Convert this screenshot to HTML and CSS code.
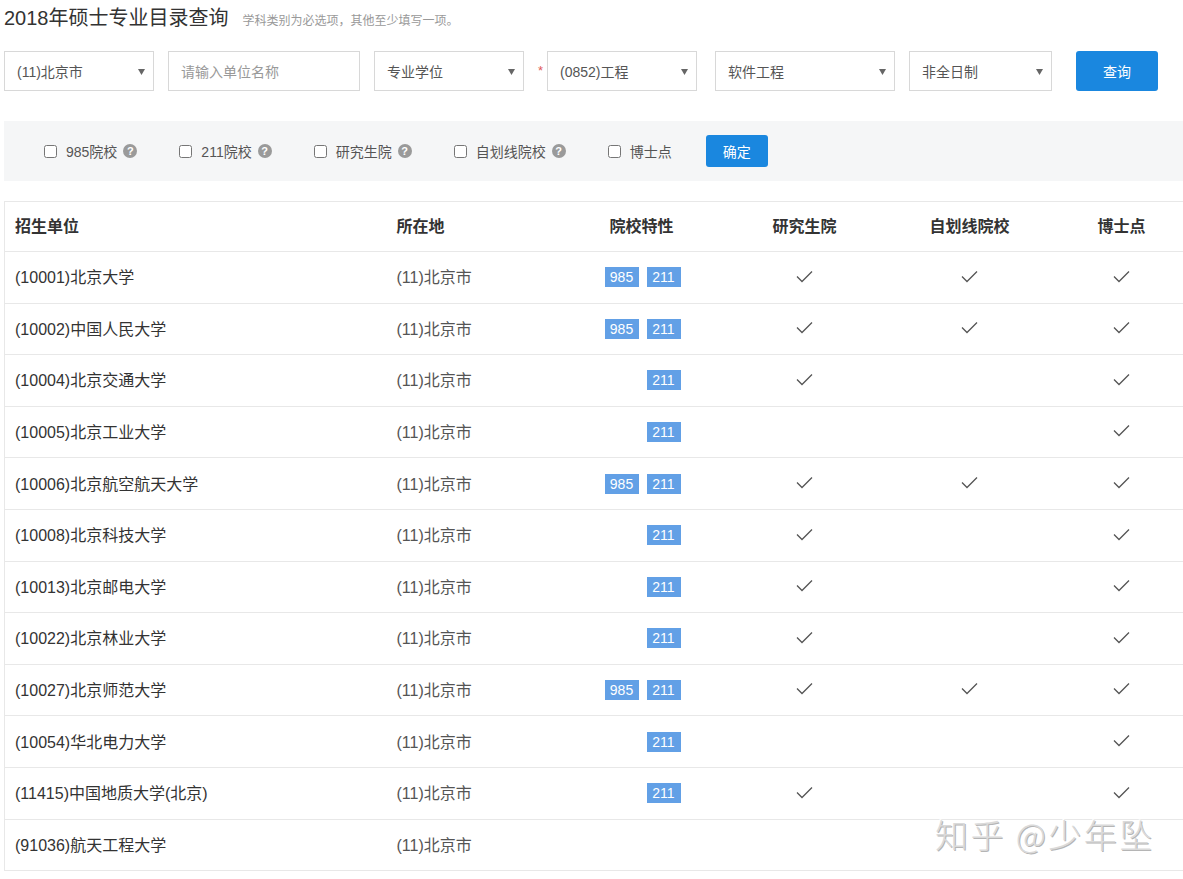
FILE: index.html
```html
<!DOCTYPE html>
<html lang="zh-CN">
<head>
<meta charset="utf-8">
<title>2018年硕士专业目录查询</title>
<link rel="stylesheet" href="styles.css">
</head>
<body>
<div class="page">
  <div class="title-row">
    <h1 class="title">2018年硕士专业目录查询</h1>
    <span class="subtitle">学科类别为必选项，其他至少填写一项。</span>
  </div>

  <div class="form-row">
    <div class="field select w150"><span>(11)北京市</span><svg class="arrow" width="7" height="7" viewBox="0 0 7 7"><polygon points="0,1 7,1 3.5,7" fill="#666"/></svg></div>
    <div class="field input w192"><span class="ph">请输入单位名称</span></div>
    <div class="field select w150"><span>专业学位</span><svg class="arrow" width="7" height="7" viewBox="0 0 7 7"><polygon points="0,1 7,1 3.5,7" fill="#666"/></svg></div>
    <span class="req">*</span>
    <div class="field select w150"><span>(0852)工程</span><svg class="arrow" width="7" height="7" viewBox="0 0 7 7"><polygon points="0,1 7,1 3.5,7" fill="#666"/></svg></div>
    <div class="field select w180 ml18"><span>软件工程</span><svg class="arrow" width="7" height="7" viewBox="0 0 7 7"><polygon points="0,1 7,1 3.5,7" fill="#666"/></svg></div>
    <div class="field select w143"><span>非全日制</span><svg class="arrow" width="7" height="7" viewBox="0 0 7 7"><polygon points="0,1 7,1 3.5,7" fill="#666"/></svg></div>
    <button class="btn btn-query">查询</button>
  </div>

  <div class="filter-bar">
    <label class="opt"><input type="checkbox"><span>985院校</span><i class="help">?</i></label>
    <label class="opt"><input type="checkbox"><span>211院校</span><i class="help">?</i></label>
    <label class="opt"><input type="checkbox"><span>研究生院</span><i class="help">?</i></label>
    <label class="opt"><input type="checkbox"><span>自划线院校</span><i class="help">?</i></label>
    <label class="opt last"><input type="checkbox"><span>博士点</span></label>
    <button class="btn btn-ok">确定</button>
  </div>

  <table class="result">
    <colgroup>
      <col class="c1"><col class="c2"><col class="c3"><col class="c4"><col class="c5"><col class="c6">
    </colgroup>
    <thead>
      <tr><th class="l">招生单位</th><th class="l">所在地</th><th>院校特性</th><th>研究生院</th><th>自划线院校</th><th>博士点</th></tr>
    </thead>
    <tbody id="rows"></tbody>
  </table>

  <div class="watermark">知乎 @少年坠</div>
</div>
<script src="app.js"></script>
</body>
</html>
```

FILE: app.js
```js
var data = [
  ["(10001)北京大学", 1, 1, 1, 1, 1],
  ["(10002)中国人民大学", 1, 1, 1, 1, 1],
  ["(10004)北京交通大学", 0, 1, 1, 0, 1],
  ["(10005)北京工业大学", 0, 1, 0, 0, 1],
  ["(10006)北京航空航天大学", 1, 1, 1, 1, 1],
  ["(10008)北京科技大学", 0, 1, 1, 0, 1],
  ["(10013)北京邮电大学", 0, 1, 1, 0, 1],
  ["(10022)北京林业大学", 0, 1, 1, 0, 1],
  ["(10027)北京师范大学", 1, 1, 1, 1, 1],
  ["(10054)华北电力大学", 0, 1, 0, 0, 1],
  ["(11415)中国地质大学(北京)", 0, 1, 1, 0, 1],
  ["(91036)航天工程大学", 0, 0, 0, 0, 0]
];
var check = '<svg class="chk" width="17" height="13" viewBox="0 0 17 13"><polyline points="1,6.5 6,11.5 16,1.5" fill="none" stroke="#555" stroke-width="1.3"/></svg>';
var html = "";
data.forEach(function (r) {
  var badges = (r[1] ? '<span class="badge">985</span>' : '') + (r[2] ? '<span class="badge">211</span>' : '');
  html += '<tr><td class="name"><span class="tx">' + r[0] + '</span></td><td class="loc"><span class="tx">(11)北京市</span></td>' +
    '<td class="tags">' + badges + '</td>' +
    '<td class="ck">' + (r[3] ? check : '') + '</td>' +
    '<td class="ck">' + (r[4] ? check : '') + '</td>' +
    '<td class="ck">' + (r[5] ? check : '') + '</td></tr>';
});
document.getElementById("rows").innerHTML = html;
```

FILE: styles.css
```css
html, body {
  margin: 0;
  padding: 0;
  overflow: hidden;
  background: #fff;
}
body {
  font-family: "Liberation Sans", "Noto Sans CJK SC", sans-serif;
  color: #333;
}
.page {
  position: relative;
  padding-left: 4px;
  width: 1190px;
  height: 879px;
}
.title-row {
  display: flex;
  align-items: baseline;
  height: 36px;
}
.title {
  margin: 0;
  font-size: 20px;
  font-weight: normal;
  line-height: 36px;
  color: #333;
}
.subtitle {
  margin-left: 14px;
  font-size: 12px;
  color: #999;
}
.form-row {
  display: flex;
  align-items: center;
  margin-top: 15px;
  height: 40px;
}
.field {
  box-sizing: border-box;
  height: 40px;
  border: 1px solid #d8d8d8;
  display: flex;
  align-items: center;
  justify-content: space-between;
  padding: 0 8px 0 12px;
  font-size: 14px;
  color: #555;
  margin-right: 14px;
  background: #fff;
}
.field .ph { color: #999; }
.w150 { width: 150px; }
.w192 { width: 192px; }
.w180 { width: 180px; }
.w143 { width: 143px; }
.ml18 { margin-left: 4px; }
.req {
  color: #e05a5a;
  font-size: 13px;
  margin: 0 4px 0 0;
  width: 5px;
  position: relative;
  top: -1px;
}
.btn {
  border: 0;
  color: #fff;
  background: #1a87df;
  border-radius: 3px;
  font-family: "Liberation Sans", "Noto Sans CJK SC", sans-serif;
  font-size: 14px;
  cursor: pointer;
}
.btn-query {
  width: 82px;
  height: 40px;
  margin-left: 10px;
}
.filter-bar {
  margin-top: 30px;
  height: 60px;
  background: #f5f6f7;
  display: flex;
  align-items: center;
  padding-left: 40px;
}
.opt {
  display: flex;
  align-items: center;
  font-size: 14px;
  color: #555;
  margin-right: 42px;
}
.opt.last { margin-right: 34px; }
.opt input {
  width: 13px;
  height: 13px;
  margin: 0 9px 0 0;
}
.help {
  font-style: normal;
  display: inline-flex;
  align-items: center;
  justify-content: center;
  width: 14px;
  height: 14px;
  border-radius: 50%;
  background: #9a9a9a;
  color: #fff;
  font-size: 11px;
  font-weight: bold;
  margin-left: 6px;
  line-height: 1;
}
.btn-ok {
  width: 62px;
  height: 32px;
}
.result {
  margin-top: 20px;
  border-collapse: collapse;
  table-layout: fixed;
  width: 1186px;
  border-left: 1px solid #e8e8e8;
  border-top: 1px solid #e8e8e8;
}
.c1 { width: 382px; }
.c2 { width: 174px; }
.c3 { width: 162px; }
.c4 { width: 164px; }
.c5 { width: 166px; }
.c6 { width: 138px; }
.result th {
  height: 49px;
  font-size: 16px;
  font-weight: bold;
  color: #333;
  text-align: center;
  border-bottom: 1px solid #e8e8e8;
  padding: 0;
  line-height: 49px;
  vertical-align: top;
}
.result th.l { text-align: left; padding-left: 10px; }
.result td {
  height: 50.6px;
  padding: 0;
  border-bottom: 1px solid #e8e8e8;
  font-size: 16px;
  vertical-align: middle;
}
.result td .tx { position: relative; top: -1px; }
.result td.name { padding-left: 10px; color: #333; }
.result td.loc { padding-left: 10px; color: #555; }
.result td.tags { text-align: right; padding-right: 42px; font-size: 0; }
.badge {
  display: inline-block;
  width: 34px;
  height: 20px;
  line-height: 20px;
  text-align: center;
  background: #62a0e6;
  color: #fff;
  font-size: 14px;
  margin-left: 8px;
}
.result td.ck { text-align: center; }
.chk { display: inline-block; vertical-align: middle; position: relative; top: -2px; }
.watermark {
  position: absolute;
  left: 935px;
  top: 810px;
  font-size: 33px;
  letter-spacing: 2.5px;
  color: #dadada;
  text-shadow: 1px 1px 0 #b5b5b5, -1px -1px 0 #fff;
  white-space: nowrap;
  font-family: "Noto Sans CJK SC", sans-serif;
  font-weight: 300;
}
```
